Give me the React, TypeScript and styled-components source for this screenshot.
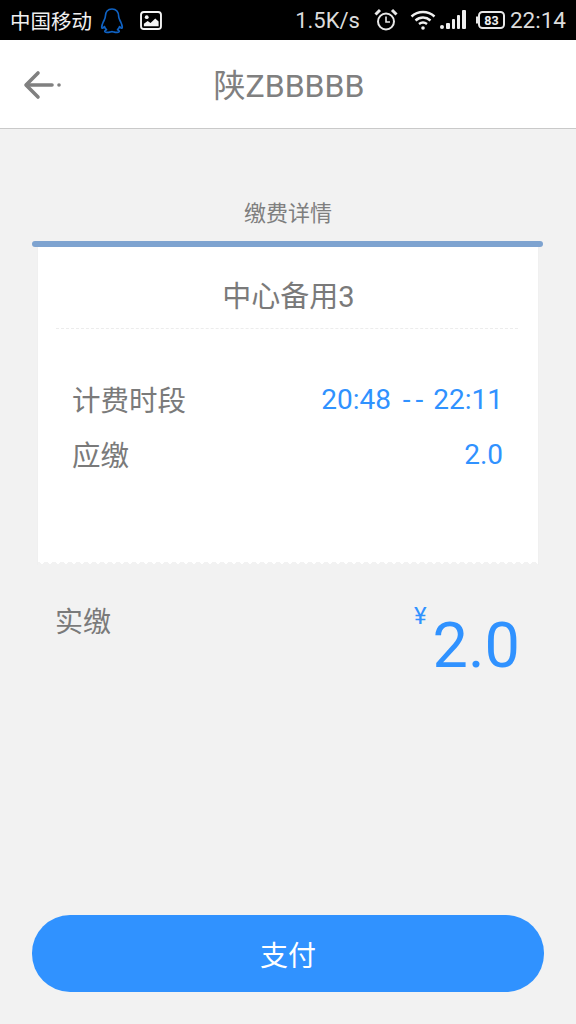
import React from "react";
import styled, { createGlobalStyle } from "styled-components";

const cjk = `Roboto, "Noto Sans CJK SC", sans-serif`;

const GlobalStyle = createGlobalStyle`
  html, body {
    margin: 0;
    padding: 0;
    background: #f2f2f2;
  }
`;

const Page = styled.div`
  width: 576px;
  height: 1024px;
  display: flex;
  flex-direction: column;
  background: #f2f2f2;
  font-family: ${cjk};
  color: #7a7a7a;
  overflow: hidden;
`;

const StatusBar = styled.div`
  height: 40px;
  flex: none;
  background: #000;
  color: #dcdcdc;
  display: flex;
  align-items: center;
  padding: 0 10px 0 10px;
`;

const Carrier = styled.span`
  color: #f0f0f0;
  font-size: 20.5px;
  margin-right: 8px;
`;

const StatusRight = styled.div`
  margin-left: auto;
  display: flex;
  align-items: center;
`;

const Speed = styled.span`
  font-size: 22px;
  margin-right: 14px;
`;

const Clock = styled.span`
  font-size: 22.5px;
  margin-left: 5px;
`;

const Header = styled.header`
  height: 88px;
  flex: none;
  box-sizing: content-box;
  background: #fff;
  border-bottom: 1px solid #c9c9c9;
  display: flex;
  align-items: center;
  justify-content: center;
  position: relative;
`;

const BackButton = styled.div`
  position: absolute;
  left: 22px;
  top: 30px;
  line-height: 0;
`;

const Title = styled.h1`
  margin: 0 0 2px;
  font-size: 32px;
  font-weight: 400;
  color: #808080;
  position: relative;
  left: 1px;
`;

const Content = styled.main`
  flex: 1;
  display: flex;
  flex-direction: column;
  padding: 69px 32px 32px;
`;

const SectionLabel = styled.div`
  text-align: center;
  font-size: 22px;
  line-height: 32px;
  color: #7f7f7f;
`;

const TicketBar = styled.div`
  height: 6px;
  margin: 11px 1px 0 0;
  border-radius: 3px;
  background: #7ea3d0;
  position: relative;
  z-index: 1;
`;

const Ticket = styled.section`
  margin: 0 6px;
  height: 318px;
  box-sizing: border-box;
  padding: 0 20px 0 18px;
  background-color: #fff;
  position: relative;
  box-shadow: 0 0 1px #e6e6e6;

  &::after {
    content: "";
    position: absolute;
    left: 0;
    right: 0;
    bottom: -1px;
    height: 4px;
    background-image:
      linear-gradient(135deg, #f2f2f2 50%, transparent 50%),
      linear-gradient(225deg, #f2f2f2 50%, transparent 50%);
    background-size: 8px 4px;
    background-repeat: repeat-x;
    transform: scaleY(-1);
  }
`;

const TicketTitle = styled.div`
  height: 82px;
  padding: 12px 0 0 3px;
  box-sizing: border-box;
  display: flex;
  align-items: center;
  justify-content: center;
  font-size: 29px;
  color: #7a7a7a;
  border-bottom: 1px dashed #ececec;
`;

const Rows = styled.div`
  display: flex;
  flex-direction: column;
  gap: 15px;
  padding: 50px 15px 0 16px;
`;

const Row = styled.div`
  display: flex;
  justify-content: space-between;
  align-items: center;
  height: 40px;
  font-size: 28.5px;
`;

const RowLabel = styled.span`
  margin-bottom: 2px;
`;

const RowValue = styled.span`
  color: #3092ff;
  font-size: 28px;
`;

const Dashes = styled.span`
  letter-spacing: 5px;
  margin: 0 -2px 0 5px;
`;

const PaidRow = styled.div`
  display: flex;
  justify-content: space-between;
  padding: 38px 24px 0 23px;
`;

const PaidLabel = styled.span`
  font-size: 28px;
  line-height: 40px;
  color: #7a7a7a;
`;

const Amount = styled.div`
  display: flex;
  align-items: flex-start;
  color: #3092ff;
`;

const Currency = styled.span`
  font-size: 24px;
  line-height: 28px;
  margin-right: 6px;
  margin-top: -1px;
`;

const AmountValue = styled.span`
  font-size: 63px;
  line-height: 76px;
  margin-top: 5px;
`;

const PayButton = styled.button`
  margin-top: auto;
  height: 77px;
  width: 100%;
  flex: none;
  border: 0;
  border-radius: 38px;
  background: #3092ff;
  color: #fff;
  font-family: ${cjk};
  font-size: 28px;
`;

const QQIcon = () => (
  <svg width="24" height="27" viewBox="0 0 26 28" fill="none" stroke="#0f62c4" strokeWidth="1.800" strokeLinejoin="round">
    <path d="M13 1.500c-4.600 0-7.200 3.400-7.200 8 0 2.400-1 3.600-2.400 6.400-1.300 2.800-1.700 6-1 6.400.8.400 1.700-.7 2.400-1.800.4 1.400 1.200 2.600 2.200 3.500-1.300.5-2 1.200-1.800 2 .3 1 3.600 1 5.200.6.900-.2 1.700-.5 2.600-.5s1.700.3 2.600.5c1.600.4 4.900.4 5.200-.6.200-.8-.5-1.500-1.800-2 1-.9 1.800-2.100 2.200-3.500.7 1.100 1.600 2.200 2.400 1.800.7-.4.300-3.600-1-6.400-1.400-2.800-2.400-4-2.400-6.400 0-4.600-2.600-8-7.200-8Z" />
  </svg>
);

const PictureIcon = () => (
  <svg width="22" height="19" viewBox="0 0 23 20" style={{ marginLeft: 16 }}>
    <rect x="1" y="1" width="21" height="18" rx="3" fill="#000" stroke="#f4f4f4" strokeWidth="2" />
    <path d="M4 16v-2.500l4-3 3 2 5-4.500 3.500 3V16Z" fill="#f4f4f4" />
    <circle cx="7" cy="6.500" r="2" fill="#f4f4f4" />
  </svg>
);

const AlarmIcon = () => (
  <svg width="24" height="24" viewBox="0 0 24 24" fill="none" stroke="#e8e8e8" strokeWidth="2">
    <circle cx="12" cy="13.500" r="8" />
    <path d="M12 8.500v5.500h4" strokeWidth="1.600" />
    <path d="M1.500 6.500 6 2M22.500 6.500 18 2" strokeWidth="3" />
  </svg>
);

const WifiIcon = () => (
  <svg width="26" height="22" viewBox="0 0 26 22" fill="none" stroke="#f0f0f0" strokeWidth="2.400" style={{ marginLeft: 12 }}>
    <path d="M1.500 7.500c6.500-6 16.500-6 23 0" />
    <path d="M5.500 11.500c4.500-4 10.500-4 15 0" />
    <path d="M9 15c2.500-2 5.500-2 8 0" />
    <circle cx="13" cy="19" r="1.800" fill="#f0f0f0" stroke="none" />
  </svg>
);

const SignalIcon = () => (
  <svg width="26" height="20" viewBox="0 0 26 20" fill="#f0f0f0" style={{ marginLeft: 4 }}>
    <circle cx="2" cy="17" r="2" />
    <rect x="6" y="13" width="4" height="6" rx="1" />
    <rect x="12" y="9" width="3" height="10" rx="1" />
    <rect x="17" y="5" width="3" height="14" rx="1" />
    <rect x="22" y="0" width="4" height="19" rx="1" />
  </svg>
);

const BatteryIcon = () => (
  <svg width="29" height="18" viewBox="0 0 29 18" style={{ marginLeft: 10 }}>
    <path d="M0 5.500h2v7H0Z" fill="#e8e8e8" />
    <rect x="3" y="1" width="25" height="16" rx="3.500" fill="#000" stroke="#e8e8e8" strokeWidth="2" />
    <text x="15.500" y="13.500" textAnchor="middle" fontSize="12.500" fontWeight="700" fontFamily="Roboto, sans-serif" fill="#f0f0f0">83</text>
  </svg>
);

const BackIcon = () => (
  <svg width="42" height="32" viewBox="0 0 42 32" fill="none" stroke="#808080" strokeWidth="3.600" strokeLinecap="round" strokeLinejoin="round">
    <path d="M16 3 4 15l12 12" />
    <path d="M5 15h25" />
    <circle cx="37" cy="15" r="1.800" fill="#808080" stroke="none" />
  </svg>
);

const App: React.FC = () => {
  return (
    <Page>
      <GlobalStyle />
      <StatusBar>
        <Carrier>中国移动</Carrier>
        <QQIcon />
        <PictureIcon />
        <StatusRight>
          <Speed>1.5K/s</Speed>
          <AlarmIcon />
          <WifiIcon />
          <SignalIcon />
          <BatteryIcon />
          <Clock>22:14</Clock>
        </StatusRight>
      </StatusBar>

      <Header>
        <BackButton>
          <BackIcon />
        </BackButton>
        <Title>陕ZBBBBB</Title>
      </Header>

      <Content>
        <SectionLabel>缴费详情</SectionLabel>
        <TicketBar />
        <Ticket>
          <TicketTitle>中心备用3</TicketTitle>
          <Rows>
            <Row>
              <RowLabel>计费时段</RowLabel>
              <RowValue>
                20:48 <Dashes>--</Dashes> 22:11
              </RowValue>
            </Row>
            <Row>
              <RowLabel>应缴</RowLabel>
              <RowValue>2.0</RowValue>
            </Row>
          </Rows>
        </Ticket>
        <PaidRow>
          <PaidLabel>实缴</PaidLabel>
          <Amount>
            <Currency>¥</Currency>
            <AmountValue>2.0</AmountValue>
          </Amount>
        </PaidRow>
        <PayButton>支付</PayButton>
      </Content>
    </Page>
  );
};

export default App;
